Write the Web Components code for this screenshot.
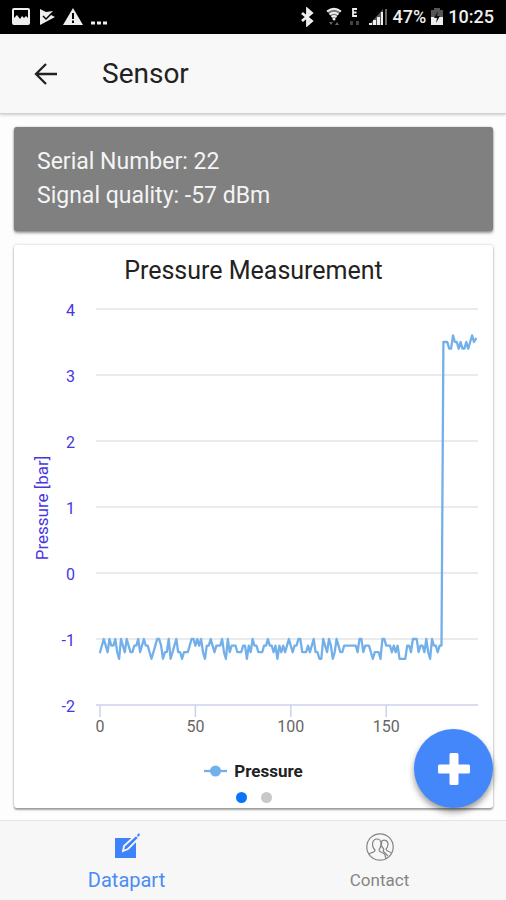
<!DOCTYPE html>
<html lang="en">
<head>
<meta charset="utf-8">
<meta name="viewport" content="width=device-width, initial-scale=1">
<title>Sensor</title>
<style>
  html, body { margin: 0; height: 100%; }
  body { font-family: Roboto, "Liberation Sans", sans-serif; background: #fdfdfd; color: #222; }
</style>
</head>
<body>
<sensor-app></sensor-app>
<script>
const define = (name, html, setup) => customElements.define(name, class extends HTMLElement {
  constructor() {
    super();
    const t = document.createElement('template');
    t.innerHTML = html;
    this.attachShadow({ mode: 'open' }).append(t.content.cloneNode(true));
  }
  connectedCallback() { if (setup) setup(this, this.shadowRoot); }
});

define('status-bar', `
<style>
  :host { display: flex; justify-content: space-between; align-items: center; height: 34px; padding: 0 12px; background: #000; color: #eee; font-size: 18px; font-weight: 500; line-height: 24px; flex: none; }
  div { display: flex; align-items: center; }
  .left { gap: 8px; }
  .right { gap: 4px; }
  svg { display: block; }
</style>
<div class="left">
  <svg width="18" height="18" viewBox="0 0 18 18"><rect x="1" y="1" width="16" height="15" rx="1" fill="none" stroke="#eee" stroke-width="2"/><path d="M2 2H16V8L14 7L12 9L10 7L8 9L5 6L2 9Z" fill="#000"/><path d="M2 10L5 7L8 11L10 8L12 10L14 8L16 10V16H2Z" fill="#eee"/></svg>
  <svg width="17" height="18" viewBox="0 0 17 18"><path d="M2 1L8 4L15 3L13 7L17 9L2 17Z" fill="#eee"/><path d="M5 8L8 11L15 4" fill="none" stroke="#000" stroke-width="1.500"/></svg>
  <svg width="20" height="18" viewBox="0 0 20 18"><path d="M10 0L20 17H0Z" fill="#eee"/><path d="M10 5V11M10 12.500V15" stroke="#000" stroke-width="2"/></svg>
  <svg width="16" height="18" viewBox="0 0 16 18"><path d="M0 15H4M6 15H10M12 15H16" stroke="#eee" stroke-width="3"/></svg>
</div>
<div class="right">
  <svg width="14" height="20" viewBox="1 0 14 20"><path d="M2 6L11.500 14L7.500 17.500V2.500L11.500 6L2 14" fill="none" stroke="#eee" stroke-width="2.800"/></svg>
  <svg width="24" height="20" viewBox="-7 0 24 20"><path d="M1 4Q8 -1 15 4L8 13Z" fill="#777"/><path d="M1 4.500Q8 -1 15 4.500M3.500 7.500Q8 4 12.500 7.500M5.500 10Q8 8 10.500 10" fill="none" stroke="#eee" stroke-width="1.800"/><circle cx="8" cy="12" r="1.500" fill="#eee"/><path d="M3 15H7L5 18ZM9 18H13L11 15Z" fill="#666"/></svg>
  <svg width="18" height="20" viewBox="0 0 18 20"><path d="M10 2H6V9H10M6 5.500H9.500" fill="none" stroke="#eee" stroke-width="1.800"/><path d="M3 18V14H6V18ZM9 18V14H12V18Z" fill="#444"/></svg>
  <svg width="20" height="20" viewBox="0 0 20 20"><path d="M0 18L14 2V18Z" fill="#555"/><path d="M0 18V16H3V18ZM4 18V13H7V18ZM8 18V10H11V18ZM12 18V5H14V18Z" fill="#eee"/><path d="M16 18V2H18V18Z" fill="#666"/></svg>
  <span>47%</span>
  <svg width="14" height="20" viewBox="0 0 14 20"><path d="M1 3H4V1H10V3H13V10H1Z" fill="#555"/><path d="M1 10H13V18H1Z" fill="#eee"/><path d="M8 4L4 11H7L6 16L10 9H7Z" fill="#111"/></svg>
  <span>10:25</span>
</div>`);

define('nav-header', `
<style>
  :host { display: flex; align-items: center; gap: 40px; height: 79px; padding: 0 30px; background: #f8f8f8; border-bottom: 1px solid #cfd1d1; box-shadow: 0 1px 3px #0003; flex: none; position: relative; }
  button { border: 0; background: none; padding: 2px; margin: 0; display: block; }
  svg { display: block; }
  h1 { margin: 0; font-size: 28px; line-height: 36px; font-weight: 400; }
</style>
<button aria-label="Back"><svg width="28" height="28" viewBox="0 0 28 28" fill="none" stroke="#222" stroke-width="2.300"><path d="M14 4L4 14L14 24M4 14H25"/></svg></button>
<h1><slot></slot></h1>`);

define('info-card', `
<style>
  :host { display: block; background: #808080; color: #f4f4f4; border-radius: 3px; padding: 18px 23px; box-shadow: 0 2px 3px #0006, 0 0 2px #0004; font-size: 23px; line-height: 34px; }
</style><slot></slot>`);

define('pressure-chart', `
<style>
  :host { display: block; }
  svg { display: block; width: 100%; height: auto; font-family: inherit; }
  .grid { stroke: #e4e4e4; stroke-width: 1.500; }
  .axis { stroke: #ccd2ea; stroke-width: 1.500; }
  .y { fill: #4637e4; font-size: 16px; text-anchor: end; }
  .x { fill: #666; font-size: 16px; text-anchor: middle; }
  .name { fill: #4637e4; font-size: 17px; text-anchor: middle; }
  .line { fill: none; stroke: #73b0ea; stroke-width: 2.300; stroke-linejoin: round; stroke-linecap: round; }
</style>
<svg viewBox="0 0 479 450" role="img" aria-label="Pressure over time"></svg>`, (el, root) => {
  const X = n => 86 + n * 1.908, Y = v => 284 - v * 66;
  // Tenths of a bar below -1, one digit per sample, ten samples per group
  const low = ('2101201102 3012012211 0210112321 0013220321 0223222100 1010231101 ' +
    '2111023021 1122211312 0112221101 1213121210 1211002221 2102233012 ' +
    '0132012211 1111120021 1123222300 1112121333 3112000211 2023011211').replace(/ /g, '');
  // Tenths of a bar relative to 3.5 once the pressure has risen
  const high = [0, 0, 0, -1, -1, 1, 0, 0, -1, 0, -1, -1, 0, -1, 0, 1, 0, 0.5];
  const pts = [...low].map((d, n) => [n, -1 - d / 10])
    .concat(high.map((d, i) => [180 + i, 3.5 + d / 10]));
  let s = '';
  for (let v = 4; v >= -2; v--) {
    s += `<path class="${v === -2 ? 'axis' : 'grid'}" d="M82 ${Y(v)}H464"/><text class="y" x="61" y="${Y(v) + 7}">${v}</text>`;
  }
  for (let n = 0; n <= 150; n += 50) {
    s += `<path class="axis" d="M${X(n)} 416V428"/><text class="x" x="${X(n)}" y="443">${n}</text>`;
  }
  s += `<text class="name" transform="translate(34 219) rotate(-90)">Pressure [bar]</text>`;
  s += `<polyline class="line" points="${pts.map(([n, v]) => X(n).toFixed(1) + ',' + Y(v).toFixed(1)).join(' ')}"/>`;
  root.querySelector('svg').innerHTML = s;
});

define('chart-card', `
<style>
  :host { display: block; background: #fff; border-radius: 3px; box-shadow: 0 2px 2px #0005, 0 0 3px #0003; padding: 8px 0 5px; }
  h2 { margin: 0; text-align: center; font-size: 25px; line-height: 36px; font-weight: 400; color: #222; }
  .legend { display: flex; justify-content: center; align-items: center; gap: 7px; margin-top: 21px; font-size: 17px; line-height: 22px; font-weight: 700; color: #222; }
  .dots { display: flex; justify-content: center; gap: 14px; margin-top: 10px; }
  .dots button { width: 11px; height: 11px; border-radius: 50%; border: 0; padding: 0; background: #c8c8c8; }
  .dots button.on { background: #0a75fb; }
</style>
<h2><slot></slot></h2>
<pressure-chart></pressure-chart>
<div class="legend"><svg width="23" height="12" viewBox="0 0 23 12"><path d="M0 6H23" stroke="#73b0ea" stroke-width="2.300"/><circle cx="11.500" cy="6" r="5.500" fill="#73b0ea"/></svg><span>Pressure</span></div>
<div class="dots"><button class="on" aria-label="Page 1"></button><button aria-label="Page 2"></button></div>`);

define('add-button', `
<style>
  :host { position: absolute; right: 13px; bottom: 12px; display: block; }
  button { display: grid; place-items: center; width: 79px; height: 79px; padding: 0; border: 0; border-radius: 50%; background: #4387fb; box-shadow: 0 4px 6px #0006; }
</style>
<button aria-label="Add"><svg width="32" height="32" viewBox="0 0 32 32"><path d="M11.500 1.500Q11.500 0 13 0H19Q20.500 0 20.500 1.500V11.500H30.500Q32 11.500 32 13V19Q32 20.500 30.500 20.500H20.500V30.500Q20.500 32 19 32H13Q11.500 32 11.500 30.500V20.500H1.500Q0 20.500 0 19V13Q0 11.500 1.500 11.500H11.500Z" fill="#fff"/></svg></button>`);

define('tab-item', `
<style>
  :host { flex: 1; display: flex; color: #858585; font-size: 17px; }
  :host([selected]) { color: #4b8bf5; font-size: 20px; }
  a { flex: 1; display: flex; flex-direction: column; align-items: center; justify-content: center; gap: 6px; color: inherit; text-decoration: none; line-height: 26px; padding-top: 5px; }
  ::slotted(svg) { display: block; }
</style>
<a href="#"><slot name="icon"></slot><span><slot></slot></span></a>`);

define('sensor-app', `
<style>
  :host { display: flex; flex-direction: column; min-height: 100vh; }
  main { flex: 1; position: relative; display: flex; flex-direction: column; gap: 14px; padding: 13px 13px 12px 14px; }
  nav { display: flex; height: 79px; flex: none; background: #f7f7f7; border-top: 1px solid #e3e3e3; }
</style>
<status-bar></status-bar>
<nav-header>Sensor</nav-header>
<main>
  <info-card><div>Serial Number: 22</div><div>Signal quality: -57 dBm</div></info-card>
  <chart-card>Pressure Measurement</chart-card>
  <add-button></add-button>
</main>
<nav>
  <tab-item selected><svg slot="icon" width="26" height="28" viewBox="0 0 26 28"><path d="M1 5H22V25H1Z" fill="#3e83fb"/><path d="M9 18L10 13L22 2L25 5L14 16Z" fill="#3e83fb" stroke="#f7f7f7" stroke-width="1.800"/><path d="M23 2L25 0L26 2L24 4Z" fill="#3e83fb"/></svg>Datapart</tab-item>
  <tab-item><svg slot="icon" width="28" height="28" viewBox="0 0 28 28" fill="none" stroke="#858585" stroke-width="1.200"><circle cx="14" cy="14" r="13.200"/><path d="M3 21C5 19 9 20 9 17C5 13 6 6 11 6C16 6 16 13 13 17C13 20 18 19 19 22L20 26"/><path d="M15 9C17 6 22 7 22 11C22 13 21 15 20 16C20 19 24 18 25 20M17 18C18 17 18 16 17 15C15 13 15 11 16 9M17 18L22 23"/></svg>Contact</tab-item>
</nav>`);
</script>
</body>
</html>
